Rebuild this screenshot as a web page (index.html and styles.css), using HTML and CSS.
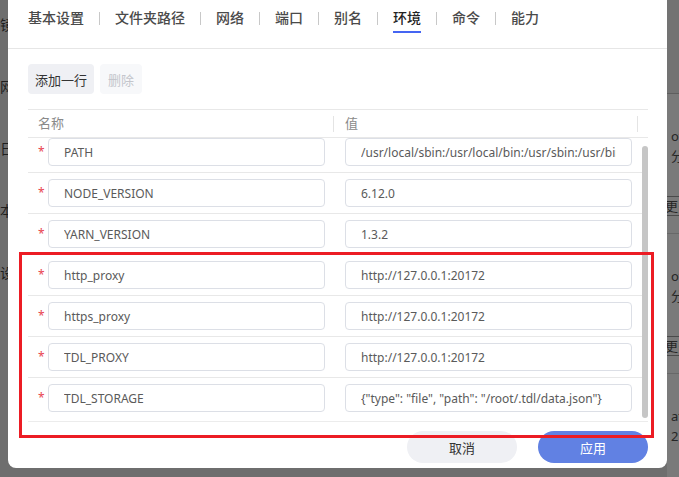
FILE: index.html
```html
<!DOCTYPE html>
<html lang="zh-CN">
<head>
    <meta charset="UTF-8">
    <title>环境</title>
    <link rel="stylesheet" href="styles.css">
</head>
<body>
    <div class="page-left">
        <span style="margin-top:14px">镜</span>
        <span>网</span>
        <span>日</span>
        <span>本</span>
        <span>设</span>
    </div>

    <div class="dialog">
        <div class="tabs">
            <span class="tab">基本设置</span><i class="sep"></i>
            <span class="tab">文件夹路径</span><i class="sep"></i>
            <span class="tab">网络</span><i class="sep"></i>
            <span class="tab">端口</span><i class="sep"></i>
            <span class="tab">别名</span><i class="sep"></i>
            <span class="tab active">环境</span><i class="sep"></i>
            <span class="tab">命令</span><i class="sep"></i>
            <span class="tab">能力</span>
        </div>

        <div class="toolbar">
            <button class="btn">添加一行</button>
            <button class="btn disabled">删除</button>
        </div>

        <div class="table">
            <div class="thead">
                <div class="th name-col">名称</div>
                <div class="th value-col">值</div>
                <div class="th gutter"></div>
            </div>
            <div class="tbody">
                <div class="rows">
                    <div class="rows-inner">
                        <div class="row">
                            <div class="name-col"><span class="req">*</span><input class="input" value="PATH"></div>
                            <div class="value-col"><input class="input" value="/usr/local/sbin:/usr/local/bin:/usr/sbin:/usr/bin:/sbin:/bin"></div>
                        </div>
                        <div class="row">
                            <div class="name-col"><span class="req">*</span><input class="input" value="NODE_VERSION"></div>
                            <div class="value-col"><input class="input" value="6.12.0"></div>
                        </div>
                        <div class="row">
                            <div class="name-col"><span class="req">*</span><input class="input" value="YARN_VERSION"></div>
                            <div class="value-col"><input class="input" value="1.3.2"></div>
                        </div>
                        <div class="row">
                            <div class="name-col"><span class="req">*</span><input class="input" value="http_proxy"></div>
                            <div class="value-col"><input class="input" value="http://127.0.0.1:20172"></div>
                        </div>
                        <div class="row">
                            <div class="name-col"><span class="req">*</span><input class="input" value="https_proxy"></div>
                            <div class="value-col"><input class="input" value="http://127.0.0.1:20172"></div>
                        </div>
                        <div class="row">
                            <div class="name-col"><span class="req">*</span><input class="input" value="TDL_PROXY"></div>
                            <div class="value-col"><input class="input" value="http://127.0.0.1:20172"></div>
                        </div>
                        <div class="row">
                            <div class="name-col"><span class="req">*</span><input class="input" value="TDL_STORAGE"></div>
                            <div class="value-col"><input class="input" value='{"type": "file", "path": "/root/.tdl/data.json"}'></div>
                        </div>
                    </div>
                </div>
                <div class="scrollbar"><div class="thumb"></div></div>
            </div>
        </div>

        <div class="footer">
            <button class="btn-round cancel">取消</button>
            <button class="btn-round primary">应用</button>
        </div>
    </div>

    <div class="page-right">
        <div class="band-top"></div>
        <div class="card">
            <span class="frag">ot</span>
            <span class="frag">分</span>
            <span class="frag more">更多</span>
        </div>
        <div class="card">
            <span class="frag">ot</span>
            <span class="frag">分</span>
            <span class="frag more">更多</span>
        </div>
        <div class="card">
            <span class="frag">ate</span>
            <span class="frag">2</span>
        </div>
    </div>

    <div class="highlight"></div>
</body>
</html>
```

FILE: styles.css
```css
* {
    box-sizing: border-box;
}
body {
    margin: 0;
    width: 679px;
    height: 477px;
    overflow: hidden;
    display: flex;
    align-items: flex-start;
    background: #6e6e6e;
    font-family: "Noto Sans", "Noto Sans CJK SC", sans-serif;
    position: relative;
}

/* dimmed page behind the dialog */
.page-left {
    width: 8px;
    flex-shrink: 0;
    display: flex;
    flex-direction: column;
    align-items: flex-end;
    gap: 40px;
    overflow: hidden;
    font-size: 14px;
    line-height: 22px;
    color: #1e1e1e;
    white-space: nowrap;
}
.page-left span {
    margin-right: -6px;
}
.page-right {
    flex: 1;
    height: 477px;
    overflow: hidden;
    background: #7a7a7a;
    font-size: 13px;
    color: #262626;
    white-space: nowrap;
}
.band-top {
    height: 94px;
    background: #737373;
    border-bottom: 1px solid #5e5e5e;
}
.card {
    display: flex;
    flex-direction: column;
    padding: 32px 0 0 4px;
    line-height: 20px;
    height: 140px;
    border-bottom: 1px solid #686868;
}
.card .more {
    margin-top: 30px;
    margin-left: -6px;
    border-top: 1px solid #4a4a4a;
    border-bottom: 1px solid #4a4a4a;
    line-height: 18px;
}

/* dialog */
.dialog {
    width: 659px;
    height: 468px;
    flex-shrink: 0;
    background: #fff;
    border-radius: 0 0 8px 8px;
    display: flex;
    flex-direction: column;
}
.tabs {
    height: 49px;
    padding: 8px 0 0 20px;
    border-bottom: 1px solid #e6e6e6;
    display: flex;
    align-items: flex-start;
    font-size: 14px;
    color: #4a4a4a;
    font-weight: 500;
}
.tab {
    line-height: 20px;
    padding-bottom: 3px;
    border-bottom: 2px solid transparent;
}
.tab.active {
    color: #222;
    border-bottom-color: #4565f2;
}
.sep {
    width: 1px;
    height: 13px;
    margin: 4px 15px 0;
    background: #c8c8c8;
}

.toolbar {
    display: flex;
    gap: 6px;
    padding: 15px 20px 0;
}
.btn {
    height: 30px;
    padding: 0 7px;
    border: none;
    border-radius: 4px;
    background: #eff0f4;
    color: #333;
    font-family: inherit;
    font-size: 13px;
}
.btn.disabled {
    padding: 0 8px;
    background: #f7f8fa;
    color: #c4c6cc;
}

.table {
    margin: 15px 19px 0 20px;
}
.thead {
    display: flex;
    height: 29px;
    border-top: 1px solid #e8e8e8;
    border-bottom: 1px solid #e8e8e8;
    font-size: 13px;
    color: #8a8a8a;
}
.th {
    line-height: 27px;
    padding-left: 10px;
    position: relative;
}
.th.name-col::after,
.th.value-col::after {
    content: "";
    position: absolute;
    right: 0;
    top: 6px;
    width: 1px;
    height: 16px;
    background: #e4e4e4;
}
.name-col {
    width: 306px;
    display: flex;
    align-items: flex-start;
    padding-left: 10px;
}
.value-col {
    width: 304px;
    display: flex;
    align-items: flex-start;
    padding-left: 11px;
}
.th.gutter {
    width: 10px;
    padding: 0;
}

.tbody {
    display: flex;
    height: 284px;
    border-bottom: 1px solid #ececec;
}
.rows {
    width: 614px;
    overflow: hidden;
}
.rows-inner {
    margin-top: -6px;
}
.row {
    display: flex;
    height: 41px;
    padding-top: 6px;
    border-bottom: 1px solid #e8e8e8;
}
.row:last-child {
    border-bottom: none;
}
.req {
    width: 10px;
    color: #e8434f;
    font-size: 12px;
    line-height: 27px;
}
.input {
    height: 28px;
    border: 1px solid #dcdfe6;
    border-radius: 4px;
    padding: 0 15px;
    font-family: inherit;
    font-size: 12px;
    color: #5a5a5a;
    background: #fff;
    outline: none;
}
.name-col .input {
    width: 277px;
}
.value-col .input {
    width: 287px;
}
.scrollbar {
    width: 6px;
    padding-top: 8px;
}
.thumb {
    height: 272px;
    border-radius: 3px;
    background: #c6c6c6;
}

.footer {
    display: flex;
    justify-content: flex-end;
    gap: 21px;
    padding: 9px 19px 0 0;
}
.btn-round {
    width: 110px;
    height: 32px;
    border: none;
    border-radius: 16px;
    font-family: inherit;
    font-size: 13px;
}
.btn-round.cancel {
    background: #eff0f4;
    color: #333;
}
.btn-round.primary {
    background: #6181e3;
    color: #fff;
}

/* red annotation frame drawn over the screenshot */
.highlight {
    position: absolute;
    left: 19px;
    top: 252px;
    width: 635px;
    height: 186px;
    border: 3px solid #ec1c24;
}
```
